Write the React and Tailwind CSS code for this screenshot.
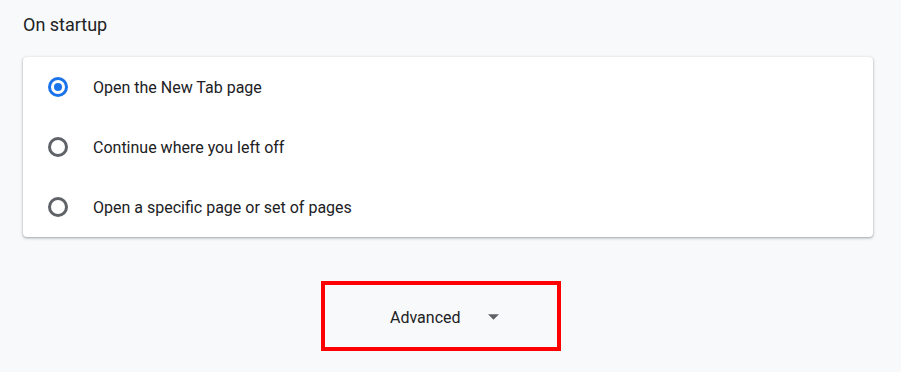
import React from 'react';

const options = [
  { label: 'Open the New Tab page', checked: true },
  { label: 'Continue where you left off', checked: false },
  { label: 'Open a specific page or set of pages', checked: false },
];

const Radio = ({ checked }) => (
  <span
    className={
      'flex h-[20px] w-[20px] items-center justify-center rounded-full border-[3px] ' +
      (checked ? 'border-[#1a73e8]' : 'border-[#5f6368]')
    }
  >
    {checked && <span className="h-[8px] w-[8px] rounded-full bg-[#1a73e8]" />}
  </span>
);

const App = () => {
  return (
    <div
      className="min-h-screen w-full bg-[#f8f9fa] pl-[23px] pr-[28px] pt-[12px] text-[#202124]"
      style={{ fontFamily: 'Roboto, "Noto Sans", sans-serif' }}
    >
      <h2 className="text-[18px] leading-[26px] font-normal">On startup</h2>
      <div className="mt-[19px] rounded-[4px] bg-white shadow-[0_1px_2px_rgba(60,64,67,0.3),0_1px_3px_1px_rgba(60,64,67,0.15)]">
        {options.map((o) => (
          <div key={o.label} className="flex h-[60px] items-center pl-[25px]">
            <Radio checked={o.checked} />
            <span className="ml-[25px] mt-[2px] text-[16px]">{o.label}</span>
          </div>
        ))}
      </div>
      <div className="ml-[298px] mt-[44px] flex h-[70px] w-[240px] items-center border-[4px] border-[#ff0000] pl-[65px] pt-[4px]">
        <span className="text-[16px]">Advanced</span>
        <svg className="ml-[27px] -mt-[3px]" width="11" height="6" viewBox="0 0 10 5">
          <path d="M0 0 L5 5 L10 0 Z" fill="#5f6368" />
        </svg>
      </div>
    </div>
  );
};

export default App;
